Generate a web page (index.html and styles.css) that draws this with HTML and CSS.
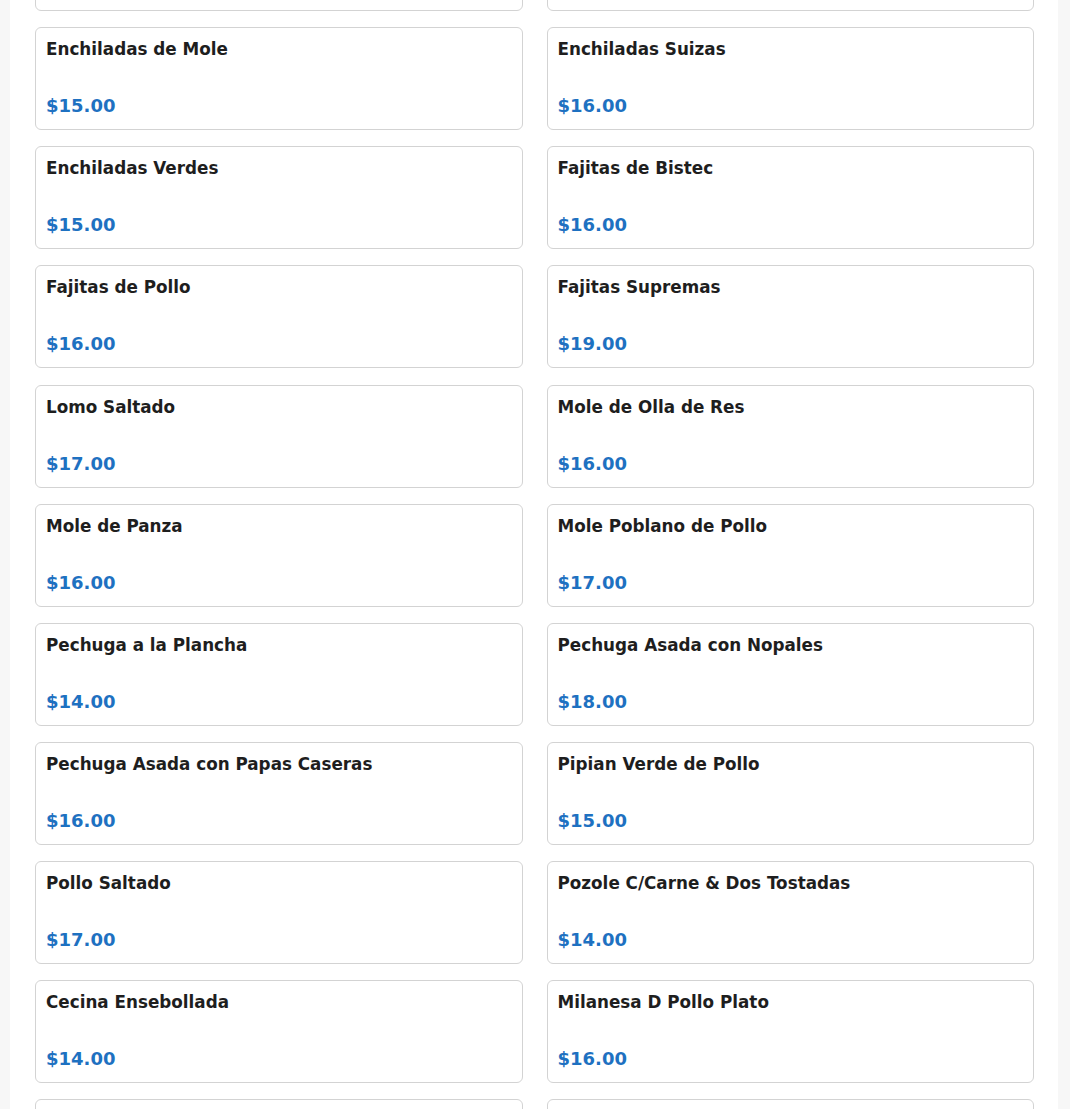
FILE: index.html
```html
<!DOCTYPE html>
<html lang="es">
<head>
<meta charset="utf-8">
<title>Menú</title>
<link rel="stylesheet" href="styles.css">
</head>
<body>
<main class="page">
  <div class="grid">
    <div class="card"><div class="name">Enchiladas Rojas</div><div class="price">$15.00</div></div>
    <div class="card"><div class="name">Enchiladas Mixtas</div><div class="price">$16.00</div></div>
    <div class="card"><div class="name">Enchiladas de Mole</div><div class="price">$15.00</div></div>
    <div class="card"><div class="name">Enchiladas Suizas</div><div class="price">$16.00</div></div>
    <div class="card"><div class="name">Enchiladas Verdes</div><div class="price">$15.00</div></div>
    <div class="card"><div class="name">Fajitas de Bistec</div><div class="price">$16.00</div></div>
    <div class="card"><div class="name">Fajitas de Pollo</div><div class="price">$16.00</div></div>
    <div class="card"><div class="name">Fajitas Supremas</div><div class="price">$19.00</div></div>
    <div class="card"><div class="name">Lomo Saltado</div><div class="price">$17.00</div></div>
    <div class="card"><div class="name">Mole de Olla de Res</div><div class="price">$16.00</div></div>
    <div class="card"><div class="name">Mole de Panza</div><div class="price">$16.00</div></div>
    <div class="card"><div class="name">Mole Poblano de Pollo</div><div class="price">$17.00</div></div>
    <div class="card"><div class="name">Pechuga a la Plancha</div><div class="price">$14.00</div></div>
    <div class="card"><div class="name">Pechuga Asada con Nopales</div><div class="price">$18.00</div></div>
    <div class="card"><div class="name">Pechuga Asada con Papas Caseras</div><div class="price">$16.00</div></div>
    <div class="card"><div class="name">Pipian Verde de Pollo</div><div class="price">$15.00</div></div>
    <div class="card"><div class="name">Pollo Saltado</div><div class="price">$17.00</div></div>
    <div class="card"><div class="name">Pozole C/Carne &amp; Dos Tostadas</div><div class="price">$14.00</div></div>
    <div class="card"><div class="name">Cecina Ensebollada</div><div class="price">$14.00</div></div>
    <div class="card"><div class="name">Milanesa D Pollo Plato</div><div class="price">$16.00</div></div>
    <div class="card"><div class="name">Chile Relleno Plato</div><div class="price">$15.00</div></div>
    <div class="card"><div class="name">Chicharrón en Salsa Verde</div><div class="price">$15.00</div></div>
  </div>
</main>
</body>
</html>
```

FILE: styles.css
```css
html, body {
  margin: 0;
  padding: 0;
  background: #f7f7f7;
  font-family: "DejaVu Sans", "Noto Sans", sans-serif;
}

.page {
  margin: -92px 12px 0 10px;
  background: #ffffff;
  padding: 0 24px 40px 25px;
  min-height: 1300px;
}

.grid {
  display: grid;
  grid-template-columns: 1fr 1fr;
  column-gap: 24px;
  row-gap: 16.15px;
}

.card {
  border: 1px solid #d3d3d3;
  border-radius: 6px;
  padding: 10px;
  height: 103px;
  box-sizing: border-box;
  display: flex;
  flex-direction: column;
  justify-content: space-between;
}

.name {
  font-size: 16.8px;
  font-weight: bold;
  line-height: 20px;
  color: #1e1e1e;
  margin-top: 1px;
}

.price {
  font-size: 18px;
  font-weight: bold;
  line-height: 22px;
  color: #1e71c1;
  margin-bottom: 2px;
}
```
